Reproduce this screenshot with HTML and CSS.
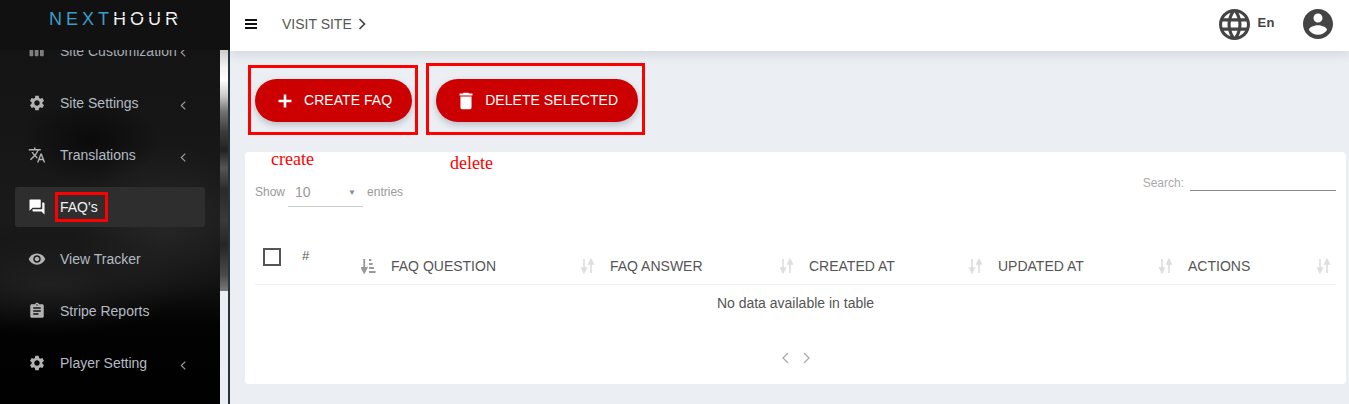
FILE: index.html
```html
<!DOCTYPE html>
<html lang="en">
<head>
<meta charset="utf-8">
<title>FAQ's</title>
<link rel="stylesheet" href="styles.css">
</head>
<body>
<div class="app">
  <aside class="side">
    <div class="logo"><span class="logo-next">NEXT</span><span class="logo-hour">HOUR</span></div>
    <div class="side-body">
      <nav class="nav">
        <div class="nav-list">
          <a class="nav-item nav-clipped"><svg class="nav-icon" viewBox="0 0 24 24"><path d="M6 5H3c-.55 0-1 .45-1 1v12c0 .55.45 1 1 1h3c.55 0 1-.45 1-1V6c0-.55-.45-1-1-1zm14 0h-3c-.55 0-1 .45-1 1v12c0 .55.45 1 1 1h3c.55 0 1-.45 1-1V6c0-.55-.45-1-1-1zm-7 0h-3c-.55 0-1 .45-1 1v12c0 .55.45 1 1 1h3c.55 0 1-.45 1-1V6c0-.55-.45-1-1-1z"/></svg><span>Site Customization</span><svg class="nav-caret" viewBox="0 0 8 12"><path d="M6 1.5 1.5 6 6 10.5"/></svg></a>
          <a class="nav-item"><svg class="nav-icon" viewBox="0 0 24 24"><path d="M19.14,12.94c0.04-0.3,0.06-0.61,0.06-0.94c0-0.32-0.02-0.64-0.07-0.94l2.03-1.58c0.18-0.14,0.23-0.41,0.12-0.61 l-1.92-3.32c-0.12-0.22-0.37-0.29-0.59-0.22l-2.39,0.96c-0.5-0.38-1.03-0.7-1.62-0.94L14.4,2.81c-0.04-0.24-0.24-0.41-0.48-0.41 h-3.84c-0.24,0-0.43,0.17-0.47,0.41L9.25,5.35C8.66,5.59,8.12,5.92,7.63,6.29L5.24,5.33c-0.22-0.08-0.47,0-0.59,0.22L2.74,8.87 C2.62,9.08,2.66,9.34,2.86,9.48l2.03,1.58C4.84,11.36,4.8,11.69,4.8,12s0.02,0.64,0.07,0.94l-2.03,1.58 c-0.18,0.14-0.23,0.41-0.12,0.61l1.92,3.32c0.12,0.22,0.37,0.29,0.59,0.22l2.39-0.96c0.5,0.38,1.03,0.7,1.62,0.94l0.36,2.54 c0.05,0.24,0.24,0.41,0.48,0.41h3.84c0.24,0,0.44-0.17,0.47-0.41l0.36-2.54c0.59-0.24,1.13-0.56,1.62-0.94l2.39,0.96 c0.22,0.08,0.47,0,0.59-0.22l1.92-3.32c0.12-0.22,0.07-0.47-0.12-0.61L19.14,12.94z M12,15.6c-1.98,0-3.6-1.62-3.6-3.6 s1.62-3.6,3.6-3.6s3.6,1.62,3.6,3.6S13.98,15.6,12,15.6z"/></svg><span>Site Settings</span><svg class="nav-caret" viewBox="0 0 8 12"><path d="M6 1.5 1.5 6 6 10.5"/></svg></a>
          <a class="nav-item"><svg class="nav-icon" viewBox="0 0 24 24"><path d="M12.87 15.07l-2.54-2.51.03-.03c1.74-1.94 2.98-4.17 3.71-6.53H17V4h-7V2H8v2H1v1.99h11.17C11.5 7.92 10.44 9.75 9 11.35 8.07 10.32 7.3 9.19 6.69 8h-2c.73 1.63 1.73 3.17 2.98 4.56l-5.09 5.02L4 19l5-5 3.11 3.11.76-2.04zM18.5 10h-2L12 22h2l1.12-3h4.75L21 22h2l-4.5-12zm-2.62 7l1.62-4.33L19.12 17h-3.24z"/></svg><span>Translations</span><svg class="nav-caret" viewBox="0 0 8 12"><path d="M6 1.5 1.5 6 6 10.5"/></svg></a>
          <a class="nav-item nav-active"><svg class="nav-icon" viewBox="0 0 24 24"><path d="M21 6h-2v9H6v2c0 .55.45 1 1 1h11l4 4V7c0-.55-.45-1-1-1zm-4 6V3c0-.55-.45-1-1-1H3c-.55 0-1 .45-1 1v14l4-4h10c.55 0 1-.45 1-1z"/></svg><span>FAQ's</span></a>
          <a class="nav-item"><svg class="nav-icon" viewBox="0 0 24 24"><path d="M12 4.5C7 4.5 2.73 7.61 1 12c1.73 4.39 6 7.5 11 7.5s9.27-3.11 11-7.5c-1.73-4.39-6-7.5-11-7.5zM12 17c-2.76 0-5-2.24-5-5s2.24-5 5-5 5 2.24 5 5-2.24 5-5 5zm0-8c-1.66 0-3 1.34-3 3s1.34 3 3 3 3-1.34 3-3-1.34-3-3-3z"/></svg><span>View Tracker</span></a>
          <a class="nav-item"><svg class="nav-icon" viewBox="0 0 24 24"><path d="M19 3h-4.18C14.4 1.84 13.3 1 12 1c-1.3 0-2.4.84-2.82 2H5c-1.1 0-2 .9-2 2v14c0 1.1.9 2 2 2h14c1.1 0 2-.9 2-2V5c0-1.1-.9-2-2-2zm-7 0c.55 0 1 .45 1 1s-.45 1-1 1-1-.45-1-1 .45-1 1-1zm2 14H7v-2h7v2zm3-4H7v-2h10v2zm0-4H7V7h10v2z"/></svg><span>Stripe Reports</span></a>
          <a class="nav-item"><svg class="nav-icon" viewBox="0 0 24 24"><path d="M19.14,12.94c0.04-0.3,0.06-0.61,0.06-0.94c0-0.32-0.02-0.64-0.07-0.94l2.03-1.58c0.18-0.14,0.23-0.41,0.12-0.61 l-1.92-3.32c-0.12-0.22-0.37-0.29-0.59-0.22l-2.39,0.96c-0.5-0.38-1.03-0.7-1.62-0.94L14.4,2.81c-0.04-0.24-0.24-0.41-0.48-0.41 h-3.84c-0.24,0-0.43,0.17-0.47,0.41L9.25,5.35C8.66,5.59,8.12,5.92,7.63,6.29L5.24,5.33c-0.22-0.08-0.47,0-0.59,0.22L2.74,8.87 C2.62,9.08,2.66,9.34,2.86,9.48l2.03,1.58C4.84,11.36,4.8,11.69,4.8,12s0.02,0.64,0.07,0.94l-2.03,1.58 c-0.18,0.14-0.23,0.41-0.12,0.61l1.92,3.32c0.12,0.22,0.37,0.29,0.59,0.22l2.39-0.96c0.5,0.38,1.03,0.7,1.62,0.94l0.36,2.54 c0.05,0.24,0.24,0.41,0.48,0.41h3.84c0.24,0,0.44-0.17,0.47-0.41l0.36-2.54c0.59-0.24,1.13-0.56,1.62-0.94l2.39,0.96 c0.22,0.08,0.47,0,0.59-0.22l1.92-3.32c0.12-0.22,0.07-0.47-0.12-0.61L19.14,12.94z M12,15.6c-1.98,0-3.6-1.62-3.6-3.6 s1.62-3.6,3.6-3.6s3.6,1.62,3.6,3.6S13.98,15.6,12,15.6z"/></svg><span>Player Setting</span><svg class="nav-caret" viewBox="0 0 8 12"><path d="M6 1.5 1.5 6 6 10.5"/></svg></a>
        </div>
      </nav>
      <div class="rail"></div>
      <div class="rail-line"></div>
    </div>
  </aside>

  <main class="main">
    <header class="topbar">
      <svg class="menu-icon" viewBox="0 0 12 10"><path d="M0 0h12v2H0zM0 4h12v2H0zM0 8h12v2H0z"/></svg>
      <a class="visit">VISIT SITE</a>
      <svg class="visit-caret" viewBox="0 0 9 12"><path d="M1.5 1 6.5 6 1.5 11"/></svg>
      <svg class="globe" viewBox="2 2 20 20"><path d="M11.99 2C6.47 2 2 6.48 2 12s4.47 10 9.99 10C17.52 22 22 17.52 22 12S17.52 2 11.99 2zm6.93 6h-2.95c-.32-1.25-.78-2.45-1.38-3.56 1.84.63 3.37 1.91 4.33 3.56zM12 4.04c.83 1.2 1.48 2.53 1.91 3.96h-3.82c.43-1.43 1.08-2.76 1.91-3.96zM4.26 14C4.1 13.36 4 12.69 4 12s.1-1.36.26-2h3.38c-.08.66-.14 1.32-.14 2 0 .68.06 1.34.14 2H4.26zm.82 2h2.95c.32 1.25.78 2.45 1.38 3.56-1.84-.63-3.37-1.9-4.33-3.56zm2.95-8H5.08c.96-1.66 2.49-2.93 4.33-3.56C8.81 5.55 8.35 6.75 8.03 8zM12 19.96c-.83-1.2-1.48-2.53-1.91-3.96h3.82c-.43 1.43-1.08 2.76-1.91 3.96zM14.34 14H9.66c-.09-.66-.16-1.32-.16-2 0-.68.07-1.35.16-2h4.68c.09.65.16 1.32.16 2 0 .68-.07 1.34-.16 2zm.25 5.56c.6-1.11 1.06-2.31 1.38-3.56h2.95c-.96 1.65-2.49 2.93-4.33 3.56zM16.36 14c.08-.66.14-1.32.14-2 0-.68-.06-1.34-.14-2h3.38c.16.64.26 1.31.26 2s-.1 1.36-.26 2h-3.38z"/></svg>
      <span class="lang">En</span>
      <svg class="account" viewBox="2 2 20 20"><path d="M12 2C6.48 2 2 6.48 2 12s4.48 10 10 10 10-4.48 10-10S17.52 2 12 2zm0 3c1.66 0 3 1.34 3 3s-1.34 3-3 3-3-1.34-3-3 1.34-3 3-3zm0 14.2c-2.5 0-4.71-1.28-6-3.22.03-1.99 4-3.08 6-3.08 1.99 0 5.97 1.09 6 3.08-1.29 1.94-3.5 3.22-6 3.22z"/></svg>
    </header>

    <section class="content">
      <div class="actions">
        <button class="btn"><svg class="btn-icon" viewBox="0 0 24 24"><path d="M18.5 13.3h-5.2v5.2h-2.6v-5.2H5.5v-2.6h5.2V5.5h2.6v5.2h5.2z"/></svg><span class="btn-label">CREATE FAQ</span></button>
        <button class="btn"><svg class="btn-icon" viewBox="-1 -1 26 26"><path d="M6 19c0 1.1.9 2 2 2h8c1.1 0 2-.9 2-2V7H6v12zM19 4h-3.5l-1-1h-5l-1 1H5v2h14V4z"/></svg><span class="btn-label">DELETE SELECTED</span></button>
      </div>

      <div class="card">
        <div class="controls">
          <div class="length">
            <span>Show</span>
            <span class="select"><span>10</span><span class="select-arrow">▼</span></span>
            <span>entries</span>
          </div>
          <div class="search"><span>Search:</span><span class="search-input"></span></div>
        </div>

        <div class="thead">
          <div class="th th-check"><span class="checkbox"></span></div>
          <div class="th th-num"><span class="num">#</span>
            <svg class="sort sort-on" viewBox="0 0 15 16"><path d="M3.2 1v11M.8 10 3.2 14.5 5.6 10z"/><rect x="8" y="1" width="2.4" height="2"/><rect x="8" y="5" width="3.6" height="2"/><rect x="8" y="9" width="5" height="2"/><rect x="8" y="13" width="6.6" height="2"/></svg>
          </div>
          <div class="th">FAQ QUESTION<svg class="sort" viewBox="0 0 15 16"><path d="M4 1v11M1.8 10 4 14.5 6.2 10zM11 15V4M8.8 6 11 1.5 13.2 6z"/></svg></div>
          <div class="th">FAQ ANSWER<svg class="sort" viewBox="0 0 15 16"><path d="M4 1v11M1.8 10 4 14.5 6.2 10zM11 15V4M8.8 6 11 1.5 13.2 6z"/></svg></div>
          <div class="th">CREATED AT<svg class="sort" viewBox="0 0 15 16"><path d="M4 1v11M1.8 10 4 14.5 6.2 10zM11 15V4M8.8 6 11 1.5 13.2 6z"/></svg></div>
          <div class="th">UPDATED AT<svg class="sort" viewBox="0 0 15 16"><path d="M4 1v11M1.8 10 4 14.5 6.2 10zM11 15V4M8.8 6 11 1.5 13.2 6z"/></svg></div>
          <div class="th">ACTIONS<svg class="sort" viewBox="0 0 15 16"><path d="M4 1v11M1.8 10 4 14.5 6.2 10zM11 15V4M8.8 6 11 1.5 13.2 6z"/></svg></div>
        </div>
        <div class="empty">No data available in table</div>
        <div class="pager">
          <svg class="pager-icon" viewBox="0 0 10 12"><path d="M8 1 3 6 8 11"/></svg>
          <svg class="pager-icon" viewBox="0 0 10 12"><path d="M2 1 7 6 2 11"/></svg>
        </div>
      </div>
    </section>
  </main>
</div>

<div class="mark mark-faq"></div>
<div class="mark mark-create"></div>
<div class="mark mark-delete"></div>
<span class="note note-create">create</span>
<span class="note note-delete">delete</span>
</body>
</html>
```

FILE: styles.css
```css
* { box-sizing: border-box; }
html, body { margin: 0; height: 100%; }
body {
  font-family: "Liberation Sans", Arial, sans-serif;
  font-size: 14px;
  color: #555;
  background: #ebeef3;
  overflow: hidden;
  position: relative;
}
svg { display: block; flex: none; }

.app { display: grid; grid-template-columns: 230px 1fr; height: 404px; }

/* Sidebar */
.side { display: flex; flex-direction: column; height: 404px; min-width: 0; }
.logo {
  height: 50px;
  flex: none;
  background: #111;
  padding: 9px 0 0 49px;
  font-size: 18px;
  line-height: 20px;
  letter-spacing: 4px;
  white-space: nowrap;
  position: relative;
  z-index: 2;
}
.logo::before {
  content: "";
  position: absolute;
  left: 110px;
  top: 16px;
  width: 66px;
  height: 1px;
  background: #111;
}
.logo::after {
  content: "";
  position: absolute;
  left: 176px;
  top: 17px;
  border-left: 3px solid #3d9cc4;
  border-top: 1.5px solid transparent;
  border-bottom: 1.5px solid transparent;
}
.logo-next { color: #3d9cc4; }
.logo-hour { color: #f2f2f2; }

.side-body { flex: 1; display: flex; min-height: 0; }
.nav {
  width: 220px;
  flex: none;
  overflow: hidden;
  background:
    radial-gradient(ellipse 90px 80px at 165px 175px, rgba(60,60,60,.38), rgba(0,0,0,0) 100%),
    radial-gradient(ellipse 130px 50px at 50px 235px, rgba(48,48,48,.5), rgba(0,0,0,0) 100%),
    radial-gradient(ellipse 70px 45px at 90px 90px, rgba(0,0,0,.55), rgba(0,0,0,0) 100%),
    linear-gradient(#141414 0, #161616 70px, #1a1a1a 170px, #111 235px, #030303 275px, #000 354px);
}
.nav-list { margin-top: -19px; }
.nav-item {
  display: flex;
  align-items: center;
  height: 40px;
  margin: 0 15px 12px;
  padding: 0 18px 0 13px;
  border-radius: 3px;
  color: #b3bcc4;
  white-space: nowrap;
}
.nav-icon { width: 18px; height: 18px; margin-right: 14px; fill: #b2b2b2; }
.nav-caret {
  width: 7px; height: 11px; margin-left: auto; margin-top: 5px;
  fill: none; stroke: #9a9a9a; stroke-width: 1.4;
}
.nav-clipped { color: #a4acb3; }
.nav-clipped .nav-icon { fill: #7e7e7e; }
.nav-clipped .nav-caret { margin-top: 2px; }
.nav-active { background: #2e2e2e; color: #f2f2f2; }
.nav-active .nav-icon { fill: #fff; }

.rail {
  width: 8px;
  flex: none;
  height: 241px;
  background: linear-gradient(#cfcfcf 0, #f4f4f4 18px, #fff 30px, #c9c9c9 46px, #707070 62px, #3b3b3b 82px, #222 100px, #555 118px, #2a2a2a 140px, #3a3a3a 170px, #262626 195px, #4a4a4a 225px, #7a7a7a 241px);
}
.rail-line { width: 2px; flex: none; background: #27343d; }

/* Main */
.main { display: flex; flex-direction: column; min-width: 0; }
.topbar {
  height: 51px;
  flex: none;
  display: flex;
  align-items: center;
  padding: 0 16px 3px 15px;
  background: #fff;
  box-shadow: 0 3px 10px rgba(60,70,80,.14);
  position: relative;
  z-index: 1;
}
.menu-icon { width: 12px; height: 10px; fill: #111; }
.visit { margin-left: 25px; color: #555; }
.visit-caret { width: 9px; height: 12px; margin-left: 6px; fill: none; stroke: #444; stroke-width: 1.7; }
.globe { width: 31px; height: 31px; margin-left: auto; fill: #444; }
.lang { margin: -3px 28px 0 7px; font-size: 13px; font-weight: 700; color: #444; letter-spacing: .5px; }
.account { width: 30px; height: 30px; fill: #444; }

.content { flex: 1; min-height: 0; padding: 28px 3px 0 15px; }
.actions { display: flex; gap: 24px; padding-left: 10px; }
.btn {
  display: flex;
  align-items: center;
  gap: 7px;
  height: 43px;
  padding: 0 20px 0 18px;
  border: 0;
  border-radius: 22px;
  background: #cc0000;
  color: #fff;
  font: 14px "Liberation Sans", Arial, sans-serif;
  box-shadow: 0 3px 6px rgba(60,70,90,.28);
}
.btn-icon { width: 24px; height: 24px; fill: #fff; }
.btn-label { margin-bottom: 2px; letter-spacing: .05px; }

.card {
  height: 232px;
  margin-top: 30px;
  padding: 0 10px;
  background: #fff;
  border-radius: 4px;
}
.controls { height: 80px; display: flex; justify-content: space-between; font-size: 12px; color: #9a9a9a; }
.length { display: flex; align-items: flex-start; padding-top: 32px; }
.select {
  display: flex;
  justify-content: space-between;
  width: 75px;
  height: 23px;
  margin: 0 4px 0 3px;
  padding: 0 7px;
  border-bottom: 1px solid #ccc;
  line-height: 16px;
}
.select > span:first-child { font-size: 14px; }
.select-arrow { font-size: 8px; color: #888; padding-top: 1px; }
.length > span:not(.select) { line-height: 16px; }
.search { display: flex; align-items: flex-start; padding-top: 24px; }
.search > span:first-child { line-height: 14px; color: #aaa; }
.search-input { width: 146px; height: 15px; margin-left: 6px; border-bottom: 1px solid #8a8a8a; }

.thead {
  display: grid;
  grid-template-columns: 37px 89px 219px 199px 189px 190px 158px;
  height: 53px;
  border-bottom: 1px solid #f0f0f0;
}
.th {
  display: flex;
  justify-content: space-between;
  align-items: center;
  padding: 16px 5px 0 10px;
  color: #555;
  white-space: nowrap;
}
.th-check { padding: 16px 0 0 8px; align-items: flex-start; }
.checkbox { width: 18px; height: 18px; border: 2px solid #555; }
.num { font-size: 13px; align-self: flex-start; }
.sort { width: 15px; height: 16px; fill: #dedede; stroke: #dedede; stroke-width: 1.6; }
.sort-on { fill: #999; stroke: none; }
.sort-on path { stroke: #999; stroke-width: 1.8; }
.empty { height: 38px; line-height: 36px; text-align: center; color: #555; }
.pager { display: flex; justify-content: center; gap: 12px; padding-top: 29px; }
.pager-icon { width: 10px; height: 12px; fill: none; stroke: #aaa; stroke-width: 1.3; }

/* Red annotations drawn over the screenshot */
.mark { position: absolute; border: 3px solid #f00; z-index: 3; }
.mark-faq { left: 55px; top: 192px; width: 53px; height: 30px; }
.mark-create { left: 248px; top: 65px; width: 170px; height: 70px; }
.mark-delete { left: 426px; top: 63px; width: 219px; height: 72px; }
.note {
  position: absolute;
  z-index: 3;
  font-family: "Liberation Serif", "Times New Roman", serif;
  font-size: 18px;
  line-height: 20px;
  color: #f00;
}
.note-create { left: 271px; top: 149px; }
.note-delete { left: 450px; top: 153px; }
```
